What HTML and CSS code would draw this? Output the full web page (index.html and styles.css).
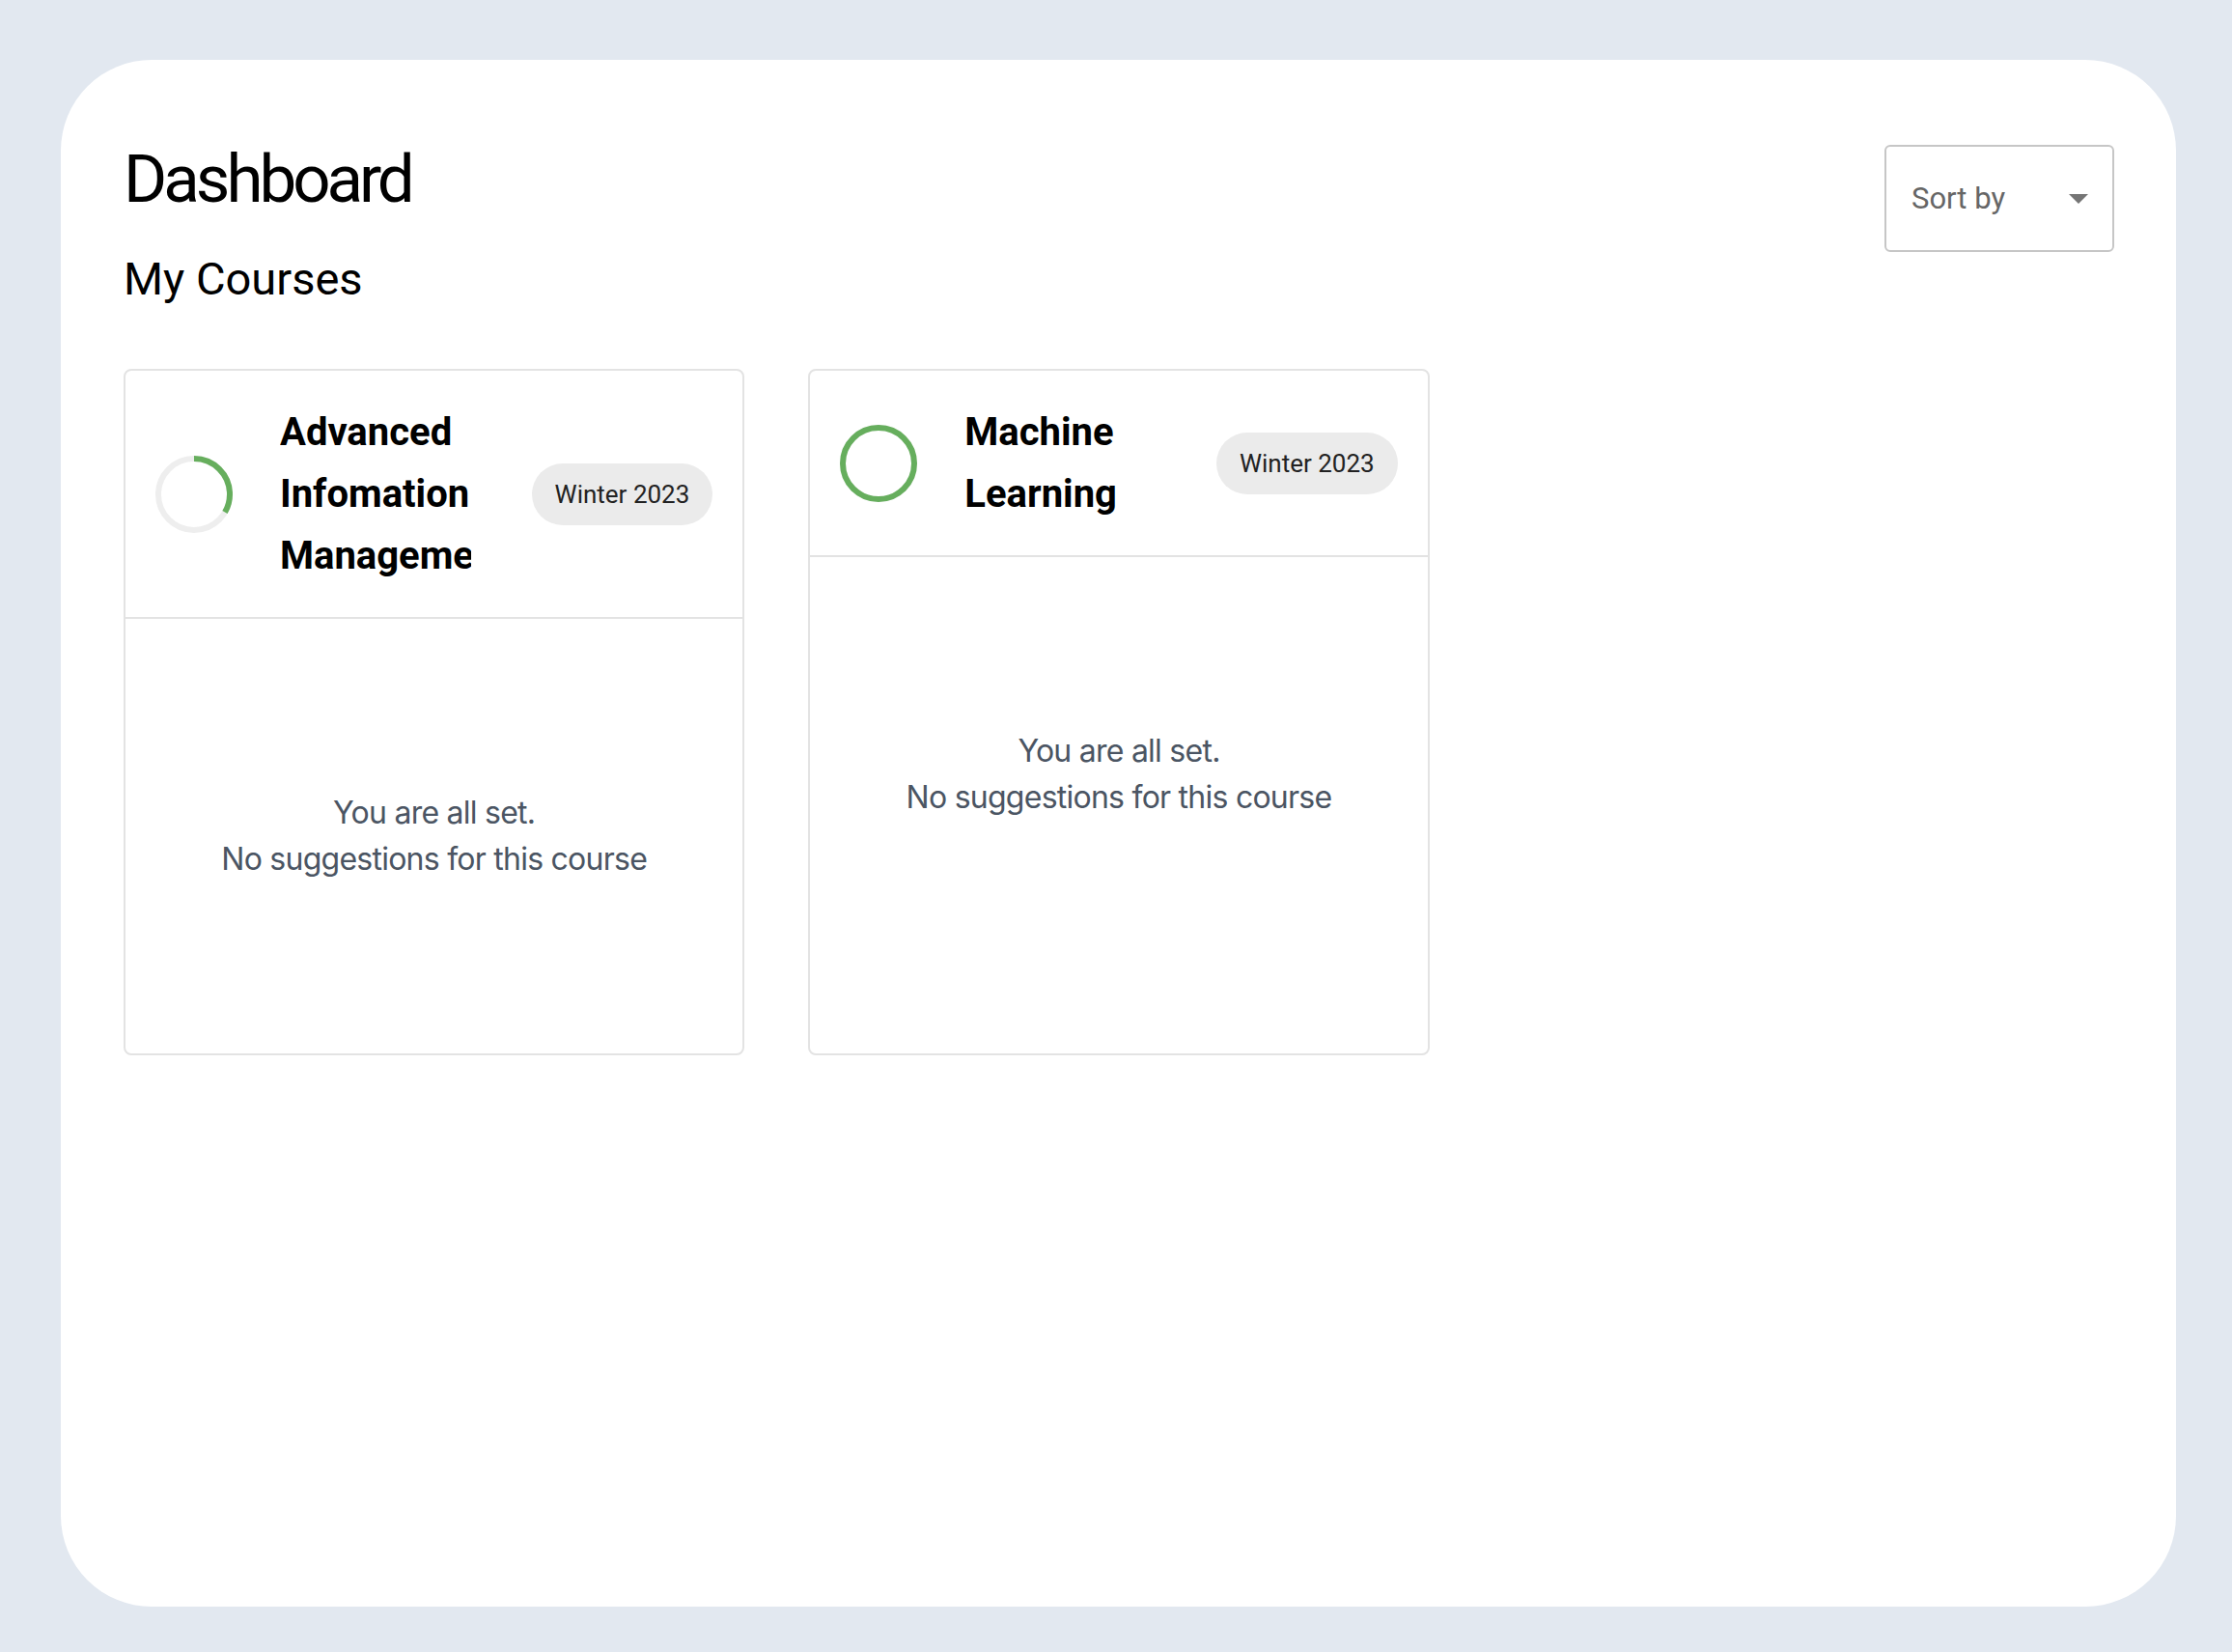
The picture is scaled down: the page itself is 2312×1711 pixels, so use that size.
FILE: index.html
```html
<!DOCTYPE html>
<html lang="en">
<head>
<meta charset="utf-8">
<title>Dashboard</title>
<link rel="stylesheet" href="styles.css">
</head>
<body>
<div class="page">
  <main class="panel">
    <header class="top">
      <div class="heads">
        <h1 class="title">Dashboard</h1>
        <h2 class="subtitle">My Courses</h2>
      </div>
      <div class="sort">
        <span class="sort-label">Sort by</span>
        <span class="caret"></span>
      </div>
    </header>
    <section class="grid">
      <article class="card">
        <div class="card-head">
          <svg class="ring" viewBox="0 0 80 80" width="80" height="80">
            <circle class="ring-track" cx="40" cy="40" r="37"/>
            <circle class="ring-fill" cx="40" cy="40" r="37" stroke-dasharray="77.5 232.5" transform="rotate(-90 40 40)"/>
          </svg>
          <h3 class="course">Advanced Infomation Management</h3>
          <span class="badge">Winter 2023</span>
        </div>
        <div class="card-body">
          <p class="note">You are all set.<br>No suggestions for this course</p>
        </div>
      </article>
      <article class="card">
        <div class="card-head">
          <svg class="ring" viewBox="0 0 80 80" width="80" height="80">
            <circle class="ring-track" cx="40" cy="40" r="37"/>
            <circle class="ring-fill" cx="40" cy="40" r="37" stroke-dasharray="232.5 232.5" transform="rotate(-90 40 40)"/>
          </svg>
          <h3 class="course">Machine Learning</h3>
          <span class="badge">Winter 2023</span>
        </div>
        <div class="card-body">
          <p class="note">You are all set.<br>No suggestions for this course</p>
        </div>
      </article>
    </section>
  </main>
</div>
</body>
</html>
```

FILE: styles.css
```css
* { box-sizing: border-box; }

html, body {
  margin: 0;
  padding: 0;
  background: #e2e8f0;
}

body {
  font-family: Roboto, "Liberation Sans", sans-serif;
  color: #000;
}

.page {
  padding: 62px 58px 47px 63px;
}

.panel {
  background: #ffffff;
  border-radius: 94px;
  height: 1602px;
  padding: 83px 64px 0 65px;
}

.top {
  display: flex;
  justify-content: space-between;
  align-items: flex-start;
}

.title {
  margin: 0;
  font-family: Roboto, sans-serif;
  font-weight: 400;
  font-size: 69px;
  line-height: 81px;
  letter-spacing: -4px;
}

.subtitle {
  margin: 35px 0 0 0;
  font-family: Roboto, sans-serif;
  font-weight: 400;
  font-size: 47px;
  line-height: 55px;
}

.sort {
  margin-top: 5px;
  width: 238px;
  height: 111px;
  border: 2px solid #c6c6c6;
  border-radius: 6px;
  display: flex;
  align-items: center;
  justify-content: space-between;
  padding: 0 25px 0 26px;
}

.sort-label {
  font-size: 31px;
  color: #666666;
}

.caret {
  width: 0;
  height: 0;
  border-left: 10px solid transparent;
  border-right: 10px solid transparent;
  border-top: 10px solid #757575;
}

.grid {
  margin-top: 66px;
  display: grid;
  grid-template-columns: repeat(3, 1fr);
  column-gap: 66px;
}

.card {
  border: 2px solid #e3e3e3;
  border-radius: 8px;
  display: flex;
  flex-direction: column;
}

.card-head {
  display: flex;
  align-items: center;
  padding: 32px 31px 31px 31px;
  border-bottom: 2px solid #e3e3e3;
}

.ring {
  flex-shrink: 0;
  display: block;
}

.ring-track {
  fill: none;
  stroke: #eeeeee;
  stroke-width: 6;
}

.ring-fill {
  fill: none;
  stroke: #66ae5d;
  stroke-width: 6;
}

.course {
  margin: 0 0 0 49px;
  width: 198px;
  flex-shrink: 0;
  overflow: hidden;
  font-size: 40px;
  font-weight: 700;
  line-height: 64px;
  color: #000;
}

.badge {
  margin-left: auto;
  flex-shrink: 0;
  height: 64px;
  padding: 0 24px;
  border-radius: 32px;
  background: #ebebeb;
  display: flex;
  align-items: center;
  font-size: 26px;
  color: #222222;
}

.card-body {
  height: 450px;
  display: flex;
  align-items: center;
  justify-content: center;
}

.note {
  margin: 0;
  text-align: center;
  font-family: Inter, "Noto Sans", sans-serif;
  font-size: 32px;
  line-height: 48px;
  letter-spacing: -0.75px;
  color: #4b5563;
}
```
